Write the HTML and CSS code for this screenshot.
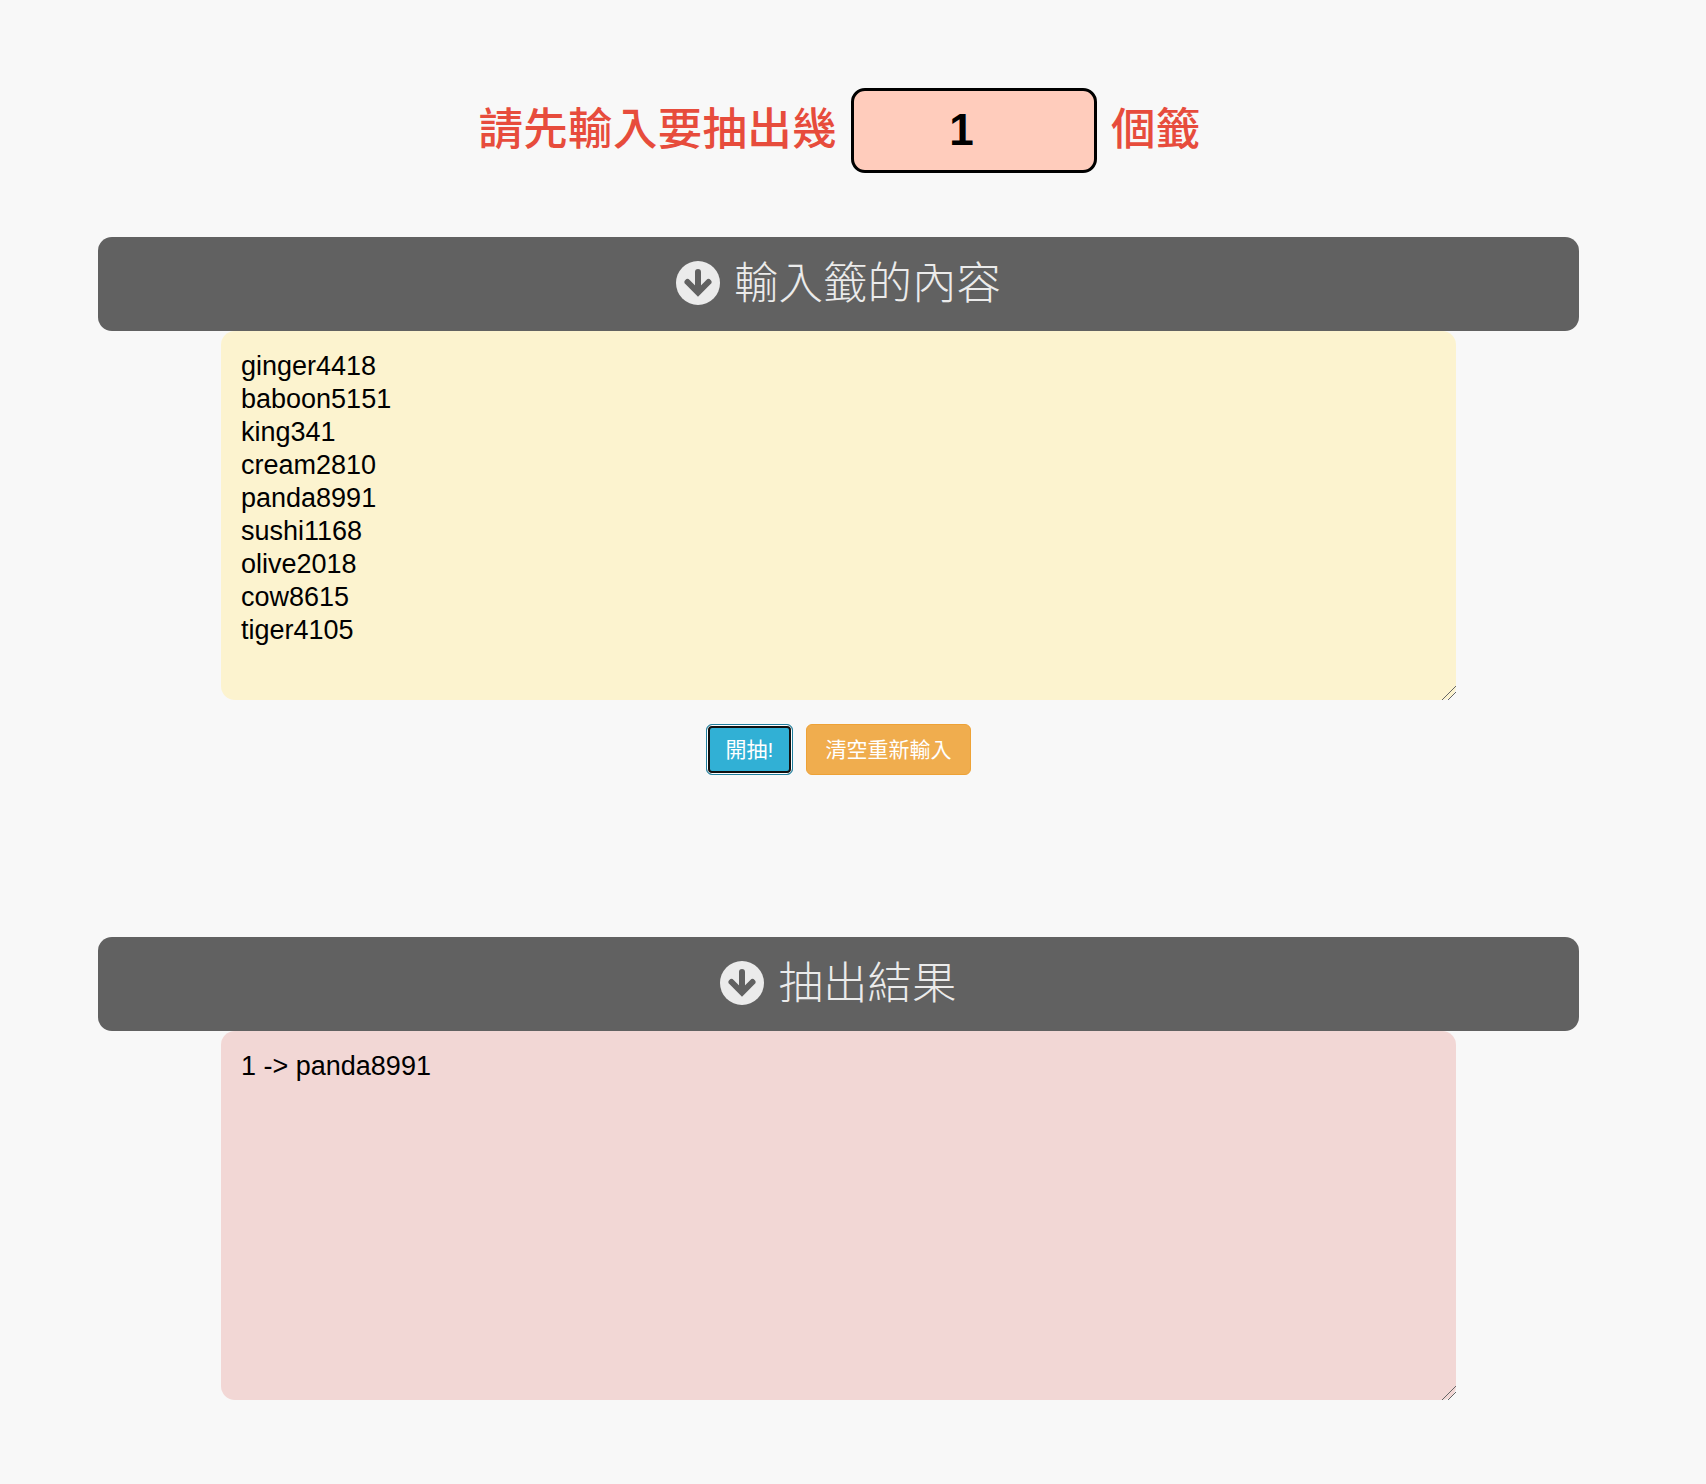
FILE: index.html
```html
<!DOCTYPE html>
<html lang="zh-Hant">
<head>
    <meta charset="UTF-8">
    <title>抽籤</title>
    <link rel="stylesheet" href="styles.css">
</head>
<body>
    <div class="container">
        <div class="count-row">
            <span class="count-label">請先輸入要抽出幾</span>
            <input class="count-input" type="number" value="1" min="1">
            <span class="count-label">個籤</span>
        </div>

        <h2 class="section-bar">
            <svg class="bar-icon" viewBox="0 0 44 44"><circle cx="22" cy="22" r="22" fill="#ebebeb"/><path d="M22 11v20M11.5 21L22 31.5 32.5 21" fill="none" stroke="#616161" stroke-width="6" stroke-linecap="round"/></svg>
            <span class="bar-title">輸入籤的內容</span>
        </h2>
        <textarea class="box box-input" spellcheck="false">ginger4418
baboon5151
king341
cream2810
panda8991
sushi1168
olive2018
cow8615
tiger4105
</textarea>
        <div class="actions">
            <button class="btn btn-info" type="button">開抽!</button>
            <button class="btn btn-warning" type="button">清空重新輸入</button>
        </div>

        <h2 class="section-bar section-result">
            <svg class="bar-icon" viewBox="0 0 44 44"><circle cx="22" cy="22" r="22" fill="#ebebeb"/><path d="M22 11v20M11.5 21L22 31.5 32.5 21" fill="none" stroke="#616161" stroke-width="6" stroke-linecap="round"/></svg>
            <span class="bar-title">抽出結果</span>
        </h2>
        <textarea class="box box-result" spellcheck="false">1 -&gt; panda8991</textarea>
    </div>
</body>
</html>
```

FILE: styles.css
```css
* {
    box-sizing: border-box;
}

html, body {
    height: 100%;
}

body {
    margin: 0;
    background: #f8f8f8;
    font-family: "Liberation Sans", "Noto Sans CJK TC", sans-serif;
}

.container {
    width: 1481px;
    margin-left: 98px;
    padding-top: 88px;
    display: flex;
    flex-direction: column;
    align-items: center;
}

.count-row {
    display: flex;
    align-items: center;
    gap: 14px;
    height: 85px;
    margin-left: 2px;
}

.count-label {
    margin-bottom: 10px;
    color: #e74c3c;
    font-size: 44.5px;
    font-weight: 500;
    letter-spacing: 0.3px;
}

.count-input {
    width: 246px;
    height: 85px;
    padding: 0 10px 2px 0;
    border: 3px solid #000;
    border-radius: 14px;
    background: #ffccbc;
    color: #000;
    font-family: inherit;
    font-size: 44px;
    font-weight: 700;
    text-align: center;
}

.section-bar {
    width: 100%;
    height: 94px;
    margin: 64px 0 0;
    display: flex;
    align-items: center;
    justify-content: center;
    gap: 14px;
    background: #616161;
    border-radius: 14px;
    color: #ebebeb;
    font-size: 44.5px;
    font-weight: 300;
}

.section-result {
    margin-top: 162px;
}

.bar-icon {
    width: 44px;
    height: 44px;
    margin-bottom: 3px;
}

.bar-title {
    margin-bottom: 10px;
}

.box {
    display: block;
    width: 1235px;
    height: 369px;
    padding: 19px 20px;
    border: none;
    outline: none;
    border-radius: 14px;
    color: #000;
    font-family: inherit;
    font-size: 27px;
    line-height: 33px;
}

.box::-webkit-resizer {
    background: linear-gradient(135deg, transparent 51%, #666 51%, #666 55%, transparent 55%, transparent 71%, #666 71%, #666 75%, transparent 75%);
}

.box-input {
    background: #fcf3cf;
}

.box-result {
    background: #f2d7d5;
}

.actions {
    display: flex;
    gap: 13px;
    margin-top: 24px;
}

.btn {
    height: 51px;
    padding: 0 18.5px 4px;
    border: 1px solid transparent;
    border-radius: 6px;
    color: #fff;
    font-family: inherit;
    font-size: 21px;
}

.btn-info {
    background: #31b0d5;
    border-color: #1f7f9e;
    box-shadow: inset 0 0 0 1px #fff, inset 0 0 0 3px #111;
}

.btn-warning {
    background: #f0ad4e;
    border-color: #eea236;
}
```
